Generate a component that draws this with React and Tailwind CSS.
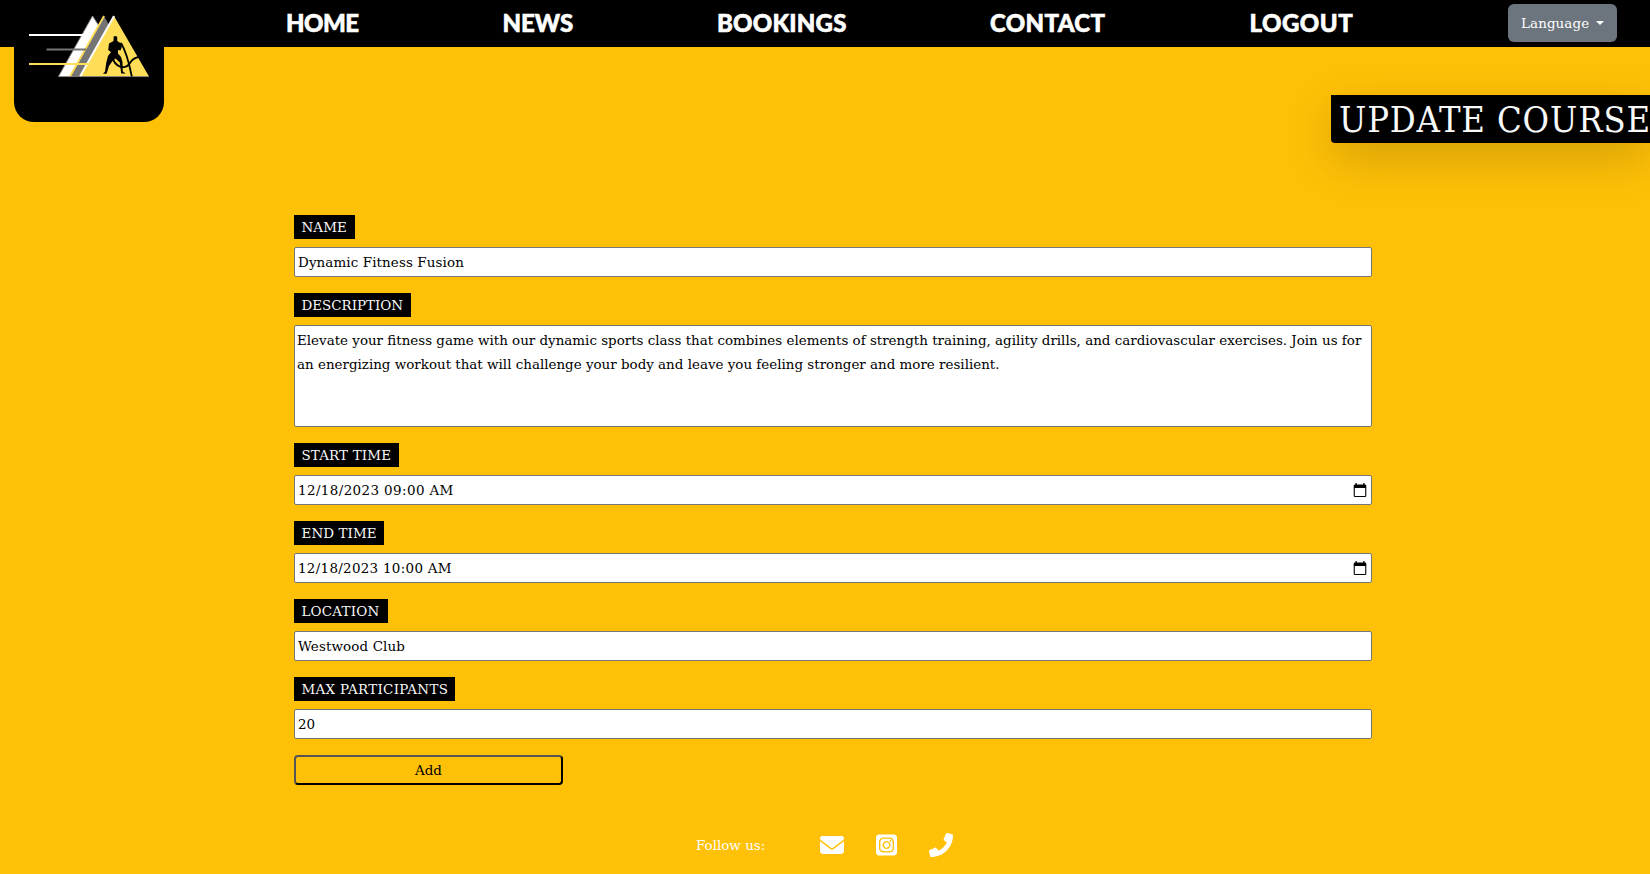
import { FaEnvelope, FaSquareInstagram } from "react-icons/fa6";
import { FaPhone } from "react-icons/fa";

function Logo() {
  return (
    <svg width="122" height="63" viewBox="28 15 122 63" fill="none">
      <path d="M92.5 16 99 26 70 76.500H58.500Z" fill="#fff" stroke="#8a8a8a" strokeWidth="1" />
      <path d="M104 16 109 25 79 76.500H70Z" fill="#757575" />
      <path d="M104 16 70 76.500" stroke="#ffdd55" strokeWidth="1.800" />
      <path d="M114 16 149 76.500H80Z" fill="#ffdd57" />
      <path d="M114 16 80 76.500" stroke="#fff" strokeWidth="2" />
      <path d="M59 76.600H149" stroke="#8a8a8a" strokeWidth="0.800" />
      <path d="M29 35H84" stroke="#fff" strokeWidth="2" />
      <path d="M46.500 49.500H86" stroke="#757575" strokeWidth="2" />
      <path d="M29 64H89" stroke="#ffdd57" strokeWidth="2" />
      <path d="M113.700 36.500 115.500 36 117.200 36.700 117.200 41 119.500 42.500 121.500 43 121.800 47 120.500 50.500 118 50 118 53.500 121 57 122.500 62 122.800 71.500 125.800 73.500 121.200 73.500 119.800 62.500 115.500 58.500 112.500 61 109 66 107 72.500 106.500 73.800 103 73.800 105 71.500 106.200 63 108 56 111 52 108.200 50 109 43.500 113.500 41Z" fill="#000" />
      <path d="M121 43C126 51 128.500 60 131.800 76.500M112.500 57C114.500 67 125 70.500 130 63 132 59.500 135 57.800 138.500 57" stroke="#000" strokeWidth="1.800" />
    </svg>
  );
}

function CalendarIcon() {
  return (
    <svg width="14" height="15" viewBox="0 0 14 15" className="shrink-0">
      <path d="M2.500 0h1.300v1.500h6.400V0h1.300v1.500H12A1.300 1.300 0 0 1 13.300 2.800v9.900A1.300 1.300 0 0 1 12 14H2A1.300 1.300 0 0 1 .7 12.700V2.800A1.300 1.300 0 0 1 2 1.500h.5ZM1.800 5v7.900h10.400V5Z" fill="#000" fillRule="evenodd" />
    </svg>
  );
}

const box = "w-full rounded-[2px] border border-[#767676] bg-white text-[#000]";

function Field({ label, labelClass, children }) {
  return (
    <div className="flex flex-col items-start gap-2">
      <label className={`h-6 bg-black pl-[7.5px] leading-[26px] whitespace-nowrap text-[#f8f9fa] ${labelClass}`}>{label}</label>
      {children}
    </div>
  );
}

function Input({ value, picker, textClass }) {
  return (
    <div className={`flex h-[30px] items-center pr-[4px] pl-[3px] ${box}`}>
      <input defaultValue={value} className={`min-w-0 grow bg-transparent pt-[2px] leading-6 outline-none ${textClass}`} />
      {picker && <CalendarIcon />}
    </div>
  );
}

export default function App() {
  return (
    <div className="flex h-[874px] flex-col overflow-hidden bg-[#ffc107] font-['DejaVu_Serif',serif] text-[13.45px]">
      <header className="flex h-[47px] shrink-0 items-start bg-black pl-[14px]">
        <div className="flex h-[122px] w-[150px] shrink-0 justify-center rounded-b-[20px] bg-black pt-[15px]">
          <Logo />
        </div>
        <nav className="ml-[122px] flex grow font-['Lato',sans-serif] text-[24px] leading-[46px] font-black text-white [-webkit-text-stroke:0.6px_white]">
          <a className="w-[216.5px] tracking-[-0.5px]">HOME</a>
          <a className="w-[214.5px]">NEWS</a>
          <a className="w-[273px] tracking-[0.2px]">BOOKINGS</a>
          <a className="w-[259.5px] tracking-[0.35px]">CONTACT</a>
          <a className="tracking-[0.5px]">LOGOUT</a>
        </nav>
        <button className="mt-1 mr-[33px] flex h-[38px] w-[109px] items-center rounded-[6px] bg-[#6c757d] pl-[13px] text-white">
          <span className="w-[75px] pt-[2px] text-left tracking-[0.1px]">Language</span>
          <span className="border-x-[4px] border-t-[4px] border-x-transparent border-t-white" />
        </button>
      </header>
      <div className="mt-12 flex shrink-0 justify-end">
        <h1 className="h-12 w-[319px] rounded-bl-[4px] bg-black pl-2 font-['DejaVu_Serif_Condensed','DejaVu_Serif',serif] text-[36px] leading-[50px] tracking-[0.85px] whitespace-nowrap text-[#f8f9fa] shadow-[0_16px_48px_rgba(0,0,0,0.175)] [font-stretch:condensed]">UPDATE COURSE</h1>
      </div>
      <form className="mt-[72px] ml-[294px] flex w-[1078px] shrink-0 flex-col gap-4">
        <Field label="NAME" labelClass="w-[61px] tracking-[0.1px]"><Input value="Dynamic Fitness Fusion" textClass="tracking-[0.11px]" /></Field>
        <Field label="DESCRIPTION" labelClass="w-[117px]">
          <textarea className={`block h-[102px] resize-none px-[2px] pt-[3px] leading-6 ${box}`} defaultValue="Elevate your fitness game with our dynamic sports class that combines elements of strength training, agility drills, and cardiovascular exercises. Join us for an energizing workout that will challenge your body and leave you feeling stronger and more resilient." />
        </Field>
        <Field label="START TIME" labelClass="w-[105px] tracking-[0.15px]"><Input value="12/18/2023 09:00 AM" textClass="tracking-[0.4px]" picker /></Field>
        <Field label="END TIME" labelClass="w-[90px] tracking-[0.1px]"><Input value="12/18/2023 10:00 AM" textClass="tracking-[0.3px]" picker /></Field>
        <Field label="LOCATION" labelClass="w-[94px] tracking-[0.2px]"><Input value="Westwood Club" textClass="tracking-[0.13px]" /></Field>
        <Field label="MAX PARTICIPANTS" labelClass="w-[161px] tracking-[0.29px]"><Input value="20" textClass="" /></Field>
        <button type="button" className="h-[30px] w-[269px] rounded-[4px] border-2 border-t-[#555] border-r-black border-b-black border-l-[#555] pt-[2px] leading-6">Add</button>
      </form>
      <footer className="mt-[48px] ml-[696px] flex h-6 shrink-0 items-center text-white">
        <span className="w-[124px] pt-[2px]">Follow us:</span>
        <div className="flex gap-8">
          <FaEnvelope className="h-6 w-6" />
          <FaSquareInstagram className="h-6 w-[21px]" />
          <FaPhone className="h-6 w-6" />
        </div>
      </footer>
    </div>
  );
}
